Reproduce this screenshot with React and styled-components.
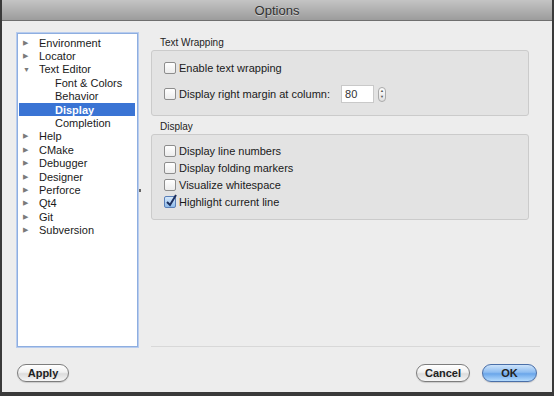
import React from "react";
import styled, { createGlobalStyle } from "styled-components";

const Global = createGlobalStyle`
  html, body { margin: 0; padding: 0; background: #2b2b2b; }
  body { font-family: "Liberation Sans", Arial, sans-serif; }
  * { box-sizing: border-box; }
`;

const Window = styled.div`
  width: 554px;
  height: 396px;
  display: flex;
  flex-direction: column;
  background: #ededed;
  border-left: 2px solid #3a3a3a;
  border-right: 2px solid #3a3a3a;
  border-bottom: 4px solid #3a3a3a;
  overflow: hidden;
`;

const TitleBar = styled.div`
  height: 21px;
  flex: none;
  display: flex;
  align-items: center;
  justify-content: center;
  background: linear-gradient(#c4c4c4, #9c9c9c);
  border-bottom: 1px solid #6f6f6f;
  font-size: 13px;
  color: #303030;
  text-shadow: 0 1px 0 rgba(255,255,255,0.45);
`;

const Body = styled.div`
  flex: 1;
  display: flex;
  flex-direction: column;
  padding: 12px 12px 0 15px;
`;

const Main = styled.div`
  display: flex;
  height: 314px;
`;

const Tree = styled.div`
  width: 121px;
  flex: none;
  background: #fff;
  border: 1px solid #8eaee0;
  box-shadow: 0 0 0 1px #b8ccee;
  padding-top: 2px;
`;

const Row = styled.div`
  height: 13.4px;
  display: flex;
  align-items: center;
  font-size: 11px;
  color: ${p => (p.$sel ? "#fff" : "#1a1a1a")};
  background: ${p => (p.$sel ? "#3a74d4" : "transparent")};
  font-weight: ${p => (p.$sel ? "bold" : "normal")};
  padding-left: ${p => (p.$child ? 36 : 4)}px;
  margin: 0 2px 0 1px;
`;

const Arrow = styled.span`
  width: 16px;
  display: inline-flex;
  align-items: center;
  color: #7a7a7a;
  font-size: 7px;
`;

const Splitter = styled.div`
  width: 13px;
  flex: none;
  display: flex;
  align-items: center;
  justify-content: center;
`;

const Grip = styled.div`
  width: 2px;
  height: 3px;
  background: #666;
  margin-left: -9px;
`;

const Pane = styled.div`
  flex: 1;
  display: flex;
  flex-direction: column;
  padding-top: 2px;
  padding-right: 11px;
  border-bottom: 1px solid #d8d8d8;
`;

const GroupTitle = styled.div`
  font-size: 10px;
  color: #222;
  padding-left: 9px;
  margin-top: ${p => p.$mt || 0}px;
  height: 15px;
  display: flex;
  align-items: flex-end;
  padding-bottom: 2px;
`;

const Group = styled.div`
  background: #e3e3e3;
  border: 1px solid #cbcbcb;
  border-radius: 3px;
  display: flex;
  flex-direction: column;
  padding: ${p => p.$pad};
  gap: ${p => p.$gap}px;
`;

const Check = styled.label`
  display: flex;
  align-items: center;
  font-size: 11px;
  color: #1a1a1a;
  padding-left: 12px;
  height: 14px;
`;

const Box = styled.span`
  width: 12px;
  height: 12px;
  border: 1px solid ${p => (p.$on ? "#5a7fb8" : "#8d8d8d")};
  border-radius: 2px;
  background: ${p =>
    p.$on ? "linear-gradient(#d6e8fb, #8fbbea)" : "linear-gradient(#ffffff, #ececec)"};
  margin-right: 3px;
  position: relative;
  flex: none;
`;

const Tick = styled.svg`
  position: absolute;
  left: 0px;
  top: -3px;
`;

const SpinRow = styled.div`
  display: flex;
  align-items: center;
`;

const SpinField = styled.div`
  width: 33px;
  height: 18px;
  margin-left: 11px;
  background: #fff;
  border: 1px solid #c9c9c9;
  font-size: 11px;
  color: #333;
  display: flex;
  align-items: center;
  padding-left: 3px;
`;

const Stepper = styled.div`
  width: 8px;
  height: 15px;
  margin-left: 4px;
  border: 1px solid #aaa;
  border-radius: 4px;
  background: linear-gradient(#fdfdfd, #e0e0e0);
  display: flex;
  flex-direction: column;
  align-items: center;
  justify-content: space-around;
  font-size: 4px;
  color: #555;
  line-height: 4px;
`;

const Footer = styled.div`
  display: flex;
  align-items: center;
  padding-top: 17px;
  padding-right: 3px;
`;

const Spacer = styled.div`
  flex: 1;
`;

const Button = styled.button`
  height: 18px;
  width: ${p => p.$w}px;
  margin-left: ${p => p.$ml || 0}px;
  border-radius: 9px;
  border: 1px solid ${p => (p.$primary ? "#4a6fa8" : "#7d7d7d")};
  background: ${p =>
    p.$primary
      ? "linear-gradient(#cde3fa 0%, #8ebdf1 45%, #6aa6ea 55%, #b5dbfd 100%)"
      : "linear-gradient(#ffffff 0%, #f1f1f1 45%, #dcdcdc 55%, #f6f6f6 100%)"};
  font-family: "Liberation Sans", Arial, sans-serif;
  font-size: 11px;
  font-weight: bold;
  color: #222;
  padding: 0;
  box-shadow: 0 1px 1px rgba(0,0,0,0.15);
`;

const items = [
  { t: "Environment", a: "r" },
  { t: "Locator", a: "r" },
  { t: "Text Editor", a: "d" },
  { t: "Font & Colors", c: true },
  { t: "Behavior", c: true },
  { t: "Display", c: true, s: true },
  { t: "Completion", c: true },
  { t: "Help", a: "r" },
  { t: "CMake", a: "r" },
  { t: "Debugger", a: "r" },
  { t: "Designer", a: "r" },
  { t: "Perforce", a: "r" },
  { t: "Qt4", a: "r" },
  { t: "Git", a: "r" },
  { t: "Subversion", a: "r" },
];

function CheckBox({ checked, children }) {
  return (
    <Check>
      <Box $on={checked}>
        {checked && (
          <Tick width="13" height="14" viewBox="0 0 13 14">
            <path d="M2 8 L5 11 L11 1" fill="none" stroke="#1c2f5e" strokeWidth="2" />
          </Tick>
        )}
      </Box>
      {children}
    </Check>
  );
}

export default function App() {
  return (
    <>
      <Global />
      <Window>
        <TitleBar>Options</TitleBar>
        <Body>
          <Main>
            <Tree>
              {items.map(it => (
                <Row key={it.t} $sel={it.s} $child={it.c}>
                  {!it.c && <Arrow>{it.a === "d" ? "▼" : "▶"}</Arrow>}
                  {it.t}
                </Row>
              ))}
            </Tree>
            <Splitter>
              <Grip />
            </Splitter>
            <Pane>
              <GroupTitle>Text Wrapping</GroupTitle>
              <Group $pad="10px 0 12px" $gap={10}>
                <CheckBox>Enable text wrapping</CheckBox>
                <SpinRow>
                  <CheckBox>Display right margin at column:</CheckBox>
                  <SpinField>80</SpinField>
                  <Stepper>
                    <span>▲</span>
                    <span>▼</span>
                  </Stepper>
                </SpinRow>
              </Group>
              <GroupTitle $mt={3}>Display</GroupTitle>
              <Group $pad="9px 0 10px" $gap={3}>
                <CheckBox>Display line numbers</CheckBox>
                <CheckBox>Display folding markers</CheckBox>
                <CheckBox>Visualize whitespace</CheckBox>
                <CheckBox checked>Highlight current line</CheckBox>
              </Group>
            </Pane>
          </Main>
          <Footer>
            <Button $w={52}>Apply</Button>
            <Spacer />
            <Button $w={54}>Cancel</Button>
            <Button $w={55} $ml={12} $primary>OK</Button>
          </Footer>
        </Body>
      </Window>
    </>
  );
}
